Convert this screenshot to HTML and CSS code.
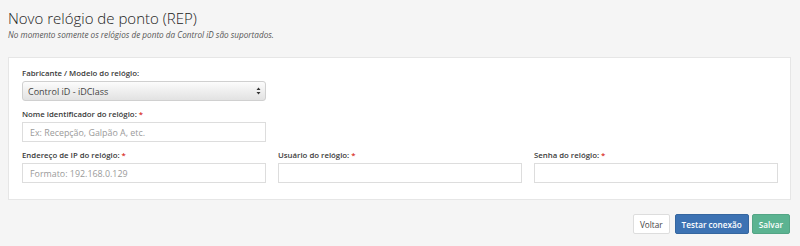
FILE: index.html
```html
<!DOCTYPE html>
<html lang="pt-BR">
<head>
  <meta charset="UTF-8" />
  <title>Novo relógio de ponto (REP)</title>
  <link rel="stylesheet" href="styles.css">
</head>
<body>
  <div class="page-header">
    <h1>Novo relógio de ponto (REP)</h1>
    <p class="hint">No momento somente os relógios de ponto da Control iD são suportados.</p>
  </div>

  <div class="panel">
    <div class="form-grid">
      <div class="field">
        <label>Fabricante / Modelo do relógio:</label>
        <div class="select">
          <span>Control iD - iDClass</span>
          <svg width="5" height="8" viewBox="0 0 5 8"><path d="M2.5 0.5 L4.5 3 L0.5 3 Z M2.5 7.5 L4.5 5 L0.5 5 Z" fill="#333"/></svg>
        </div>
      </div>
    </div>
    <div class="form-grid">
      <div class="field">
        <label>Nome identificador do relógio: <span class="req">*</span></label>
        <input type="text" placeholder="Ex: Recepção, Galpão A, etc.">
      </div>
    </div>
    <div class="form-grid">
      <div class="field">
        <label>Endereço de IP do relógio: <span class="req">*</span></label>
        <input type="text" placeholder="Formato: 192.168.0.129">
      </div>
      <div class="field">
        <label>Usuário do relógio: <span class="req">*</span></label>
        <input type="text">
      </div>
      <div class="field">
        <label>Senha do relógio: <span class="req">*</span></label>
        <input type="password">
      </div>
    </div>
  </div>

  <div class="actions">
    <button class="btn btn-default">Voltar</button>
    <button class="btn btn-primary">Testar conexão</button>
    <button class="btn btn-success">Salvar</button>
  </div>
</body>
</html>
```

FILE: styles.css
```css
* { box-sizing: border-box; }
body {
  margin: 0;
  padding: 8px 9px 8px 8px;
  background: #f5f5f5;
  color: #333;
  font-family: 'Open Sans', sans-serif;
}
.page-header h1 {
  margin: 0;
  font-size: 15px;
  font-weight: 300;
  line-height: 20px;
  color: #222;
}
.hint {
  margin: 2px 0 0;
  font-size: 8.2px;
  font-style: italic;
  color: #555;
  line-height: 10px;
}
.panel {
  margin-top: 17px;
  background: #fff;
  border: 1px solid #e6e6e6;
  padding: 9px 12px 16px 13px;
}
.form-grid {
  display: grid;
  grid-template-columns: repeat(3, 1fr);
  gap: 12px;
}
.field {
  margin-bottom: 7px;
}
.form-grid:last-child .field { margin-bottom: 0; }
label {
  display: block;
  font-size: 7.8px;
  font-weight: 600;
  line-height: 12px;
  margin-bottom: 2px;
  color: #3a3a3a;
}
.req { color: #d9312b; }
input {
  display: block;
  width: 100%;
  height: 20px;
  border: 1px solid #ddd;
  padding: 0 7px;
  font-family: 'Open Sans', sans-serif;
  font-size: 8.9px;
  color: #555;
  outline: none;
}
input::placeholder { color: #9a9a9a; }
.select {
  display: flex;
  align-items: center;
  justify-content: space-between;
  height: 20px;
  padding: 0 4px 0 5px;
  border: 1px solid #d0d0d0;
  border-radius: 3px;
  background: linear-gradient(#fcfcfc, #e2e2e2);
  font-size: 9px;
  color: #444;
}
.actions {
  display: flex;
  justify-content: flex-end;
  gap: 3px;
  margin-top: 14px;
  padding-right: 1px;
}
.btn {
  height: 20px;
  padding: 0 6px;
  border: 1px solid transparent;
  border-radius: 2px;
  font-family: 'Open Sans', sans-serif;
  font-size: 8.2px;
  font-weight: 600;
  cursor: pointer;
}
.btn-default {
  background: #fff;
  border-color: #ddd;
  color: #444;
  font-weight: 400;
  margin-right: 2px;
}
.btn-primary {
  background: #3c72b3;
  border-color: #35669f;
  color: #fff;
}
.btn-success {
  background: #5bb391;
  border-color: #53a585;
  color: #fff;
}
```
